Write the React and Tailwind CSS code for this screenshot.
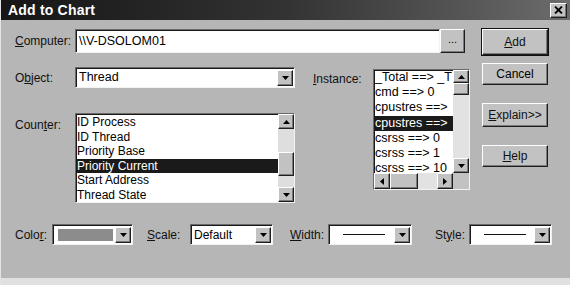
import React from "react";

// win95-style bevels
const raised = "bg-[#c2c2c2] border border-t-white border-l-white border-r-[#1e1e1e] border-b-[#1e1e1e] shadow-[inset_-1px_-1px_0_#7a7a7a]";
const sunken = "bg-white border border-t-[#6a6a6a] border-l-[#6a6a6a] border-r-[#f2f2f2] border-b-[#f2f2f2] shadow-[inset_1px_1px_0_#1a1a1a]";

const Tri = ({ dir = "down" }) => {
    if (dir === "up") return <svg width="7" height="4" viewBox="0 0 7 4"><polygon points="0,4 7,4 3.5,0" fill="#000" /></svg>;
    if (dir === "left") return <svg width="4" height="7" viewBox="0 0 4 7"><polygon points="4,0 4,7 0,3.5" fill="#000" /></svg>;
    if (dir === "right") return <svg width="4" height="7" viewBox="0 0 4 7"><polygon points="0,0 0,7 4,3.5" fill="#000" /></svg>;
    return <svg width="7" height="4" viewBox="0 0 7 4"><polygon points="0,0 7,0 3.5,4" fill="#000" /></svg>;
};

const ArrowBtn = ({ dir, className = "" }) => (
    <div className={`${raised} flex items-center justify-center shrink-0 ${className}`}>
        <Tri dir={dir} />
    </div>
);

// underlined mnemonic letter
const Label = ({ before = "", key1, after = "", className = "" }) => (
    <span className={`text-[12px] text-[#111] ${className}`}>
        {before}<span className="underline underline-offset-1">{key1}</span>{after}
    </span>
);

const Combo = ({ width, children }) => (
    <div className={`${sunken} ${width} h-[21px] flex items-center justify-between pl-[3px] pr-[1px]`}>
        <div className="flex-1 flex items-center overflow-hidden">{children}</div>
        <ArrowBtn dir="down" className="w-[16px] h-[16px]" />
    </div>
);

const Button = ({ children, className = "" }) => (
    <div className={`${raised} w-[66px] flex items-center justify-center text-[12px] ${className}`}>
        {children}
    </div>
);

const counters = ["ID Process", "ID Thread", "Priority Base", "Priority Current", "Start Address", "Thread State"];
const instances = ["_Total ==> _T", "cmd ==> 0", "cpustres ==>", "cpustres ==>", "csrss ==> 0", "csrss ==> 1", "csrss ==> 10"];

const App = () => {
    return (
        <div className="w-[570px] h-[285px] bg-[#b6b6b6] flex flex-col overflow-hidden text-black font-['Liberation_Sans',Arial,sans-serif] border-l border-l-[#e4e4e4]">
            {/* title bar */}
            <div className="h-[20px] flex items-center justify-between bg-linear-to-r from-[#161616] via-[#333333] to-[#6c6c6c] pl-[7px] pr-[3px]">
                <span className="text-white font-bold text-[14px] tracking-[0.2px]">Add to Chart</span>
                <div className={`${raised} w-[17px] h-[15px] flex items-center justify-center`}>
                    <svg width="9" height="8" viewBox="0 0 9 8">
                        <path d="M1 0.5 L8 7.5 M8 0.5 L1 7.5" stroke="#000" strokeWidth="1.8" />
                    </svg>
                </div>
            </div>

            <div className="flex pt-[9px]">
                <div className="w-[481px] pl-[14px] flex flex-col">
                    {/* computer */}
                    <div className="flex items-center h-[24px]">
                        <Label key1="C" after="omputer:" className="w-[60px]" />
                        <div className={`${sunken} w-[365px] h-[24px] flex items-center pl-[3px] text-[12.5px]`}>\\V-DSOLOM01</div>
                        <div className={`${raised} w-[25px] h-[24px] flex items-center justify-center text-[11px] pb-[3px]`}>...</div>
                    </div>

                    <div className="flex mt-[14px]">
                        <div className="w-[280px] flex flex-col">
                            <div className="flex items-center h-[21px]">
                                <Label before="O" key1="b" after="ject:" className="w-[60px]" />
                                <Combo width="w-[220px]"><span className="text-[12.5px]">Thread</span></Combo>
                            </div>
                            <div className="flex mt-[25px]">
                                <Label before="Coun" key1="t" after="er:" className="w-[60px] pt-[3px]" />
                                <div className={`${sunken} w-[220px] h-[90px] flex`}>
                                    <div className="flex-1 overflow-hidden pt-[1px] text-[12px]">
                                        {counters.map((c, i) => (
                                            <div key={c} className={`h-[14.5px] leading-[14.5px] pl-[1px] whitespace-nowrap ${i === 3 ? "bg-[#1a1a1a] text-white" : ""}`}>{c}</div>
                                        ))}
                                    </div>
                                    <div className="w-[16px] flex flex-col bg-[#dedede]">
                                        <ArrowBtn dir="up" className="h-[15px]" />
                                        <div className="flex-1 flex flex-col pt-[23px]">
                                            <div className={`${raised} h-[24px]`} />
                                        </div>
                                        <ArrowBtn dir="down" className="h-[15px]" />
                                    </div>
                                </div>
                            </div>
                        </div>

                        <Label key1="I" after="nstance:" className="ml-[18px] w-[60px] pt-[3px]" />
                        <div className={`${sunken} w-[97px] h-[121px] mt-[2px] flex flex-col`}>
                            <div className="flex-1 flex overflow-hidden">
                                <div className="flex-1 overflow-hidden text-[12.5px]">
                                    {instances.map((c, i) => (
                                        <div key={i} className={`h-[15.2px] leading-[15.2px] pl-[1px] whitespace-nowrap ${i === 3 ? "bg-[#1a1a1a] text-white" : ""}`}>{c}</div>
                                    ))}
                                </div>
                                <div className="w-[16px] flex flex-col bg-[#e2e2e2]">
                                    <ArrowBtn dir="up" className="h-[13px]" />
                                    <div className={`${raised} h-[12px]`} />
                                    <div className="flex-1" />
                                    <ArrowBtn dir="down" className="h-[15px]" />
                                </div>
                            </div>
                            <div className="h-[16px] flex bg-[#e2e2e2]">
                                <ArrowBtn dir="left" className="w-[16px]" />
                                <div className={`${raised} w-[28px]`} />
                                <div className="flex-1" />
                                <ArrowBtn dir="right" className="w-[16px]" />
                                <div className="w-[16px] bg-[#c2c2c2]" />
                            </div>
                        </div>
                    </div>
                </div>

                {/* buttons */}
                <div className="w-[66px] flex flex-col">
                    <Button className="h-[26px] outline outline-1 outline-[#111]"><Label key1="A" after="dd" /></Button>
                    <Button className="h-[22px] mt-[8px]">Cancel</Button>
                    <Button className="h-[24px] mt-[18px]"><Label key1="E" after="xplain>>" /></Button>
                    <Button className="h-[22px] mt-[18px]"><Label key1="H" after="elp" /></Button>
                </div>
            </div>

            {/* bottom row */}
            <div className="flex items-center pl-[14px] mt-[21px]">
                <Label before="Colo" key1="r" after=":" className="w-[37px]" />
                <Combo width="w-[81px]"><div className="w-[55px] h-[12px] ml-[2px] bg-[#8c8c8c]" /></Combo>
                <Label key1="S" after="cale:" className="ml-[14px] w-[43px]" />
                <Combo width="w-[83px]"><span className="text-[12px]">Default</span></Combo>
                <Label key1="W" after="idth:" className="ml-[17px] w-[38px]" />
                <Combo width="w-[84px]"><div className="w-[42px] h-px ml-[11px] bg-[#111]" /></Combo>
                <Label before="St" key1="y" after="le:" className="ml-[23px] w-[34px]" />
                <Combo width="w-[83px]"><div className="w-[42px] h-px ml-[11px] bg-[#111]" /></Combo>
            </div>

            <div className="flex-1" />
            <div className="h-[7px] bg-[#e0e0e0]" />
        </div>
    );
};

export default App;
